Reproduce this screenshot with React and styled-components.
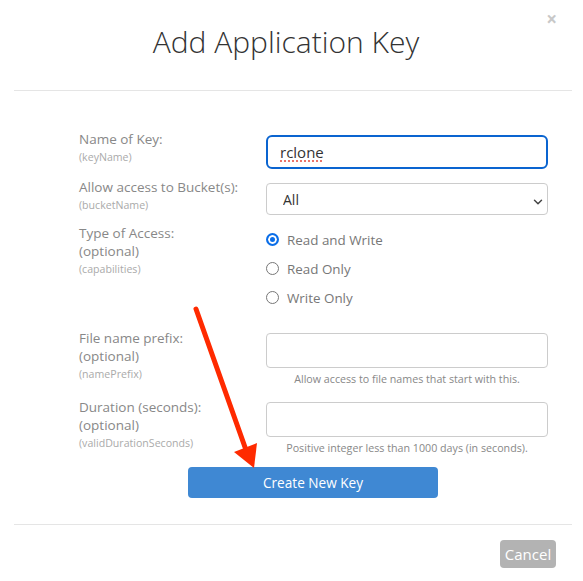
import React from 'react';
import styled, { createGlobalStyle } from 'styled-components';
import { ChevronDown } from 'lucide-react';

const GlobalStyle = createGlobalStyle`
  html, body {
    margin: 0;
    padding: 0;
    background: #fff;
    font-family: "Open Sans", "Liberation Sans", sans-serif;
  }
  * { box-sizing: border-box; }
`;

const App = () => {
  return (
    <>
      <GlobalStyle />
      <Modal>
        <Header>
          <Title>Add Application Key</Title>
          <Close>×</Close>
        </Header>
        <Body>
          <Row>
            <Label>
              <Main>Name of Key:</Main>
              <Hint>(keyName)</Hint>
            </Label>
            <Control>
              <TextInput $focus defaultValue="rclone" spellCheck />
            </Control>
          </Row>
          <Row>
            <Label>
              <Main>Allow access to Bucket(s):</Main>
              <Hint>(bucketName)</Hint>
            </Label>
            <Control>
              <SelectWrap>
                <Select defaultValue="all">
                  <option value="all">All</option>
                </Select>
                <Chevron><ChevronDown size={14} strokeWidth={2.5} /></Chevron>
              </SelectWrap>
            </Control>
          </Row>
          <Row>
            <Label>
              <Main>Type of Access:</Main>
              <Main>(optional)</Main>
              <Hint>(capabilities)</Hint>
            </Label>
            <Radios>
              <RadioRow><Radio $checked /> Read and Write</RadioRow>
              <RadioRow><Radio /> Read Only</RadioRow>
              <RadioRow><Radio /> Write Only</RadioRow>
            </Radios>
          </Row>
          <Row>
            <Label>
              <Main>File name prefix:</Main>
              <Main>(optional)</Main>
              <Hint>(namePrefix)</Hint>
            </Label>
            <Control $top={4}>
              <TextInput />
              <Help>Allow access to file names that start with this.</Help>
            </Control>
          </Row>
          <Row>
            <Label>
              <Main>Duration (seconds):</Main>
              <Main>(optional)</Main>
              <Hint>(validDurationSeconds)</Hint>
            </Label>
            <Control $top={4}>
              <TextInput />
              <Help>Positive integer less than 1000 days (in seconds).</Help>
            </Control>
          </Row>
          <CreateButton>Create New Key</CreateButton>
          <Arrow width="80" height="170" viewBox="0 0 80 170">
            <line x1="16" y1="9" x2="66" y2="150" stroke="#ff2a00" strokeWidth="5" strokeLinecap="round" />
            <polygon points="54,152 77,143 74,168" fill="#ff2a00" />
          </Arrow>
        </Body>
        <Footer>
          <CancelButton>Cancel</CancelButton>
        </Footer>
      </Modal>
    </>
  );
};

const Modal = styled.div`
  width: 583px;
  height: 581px;
  background: #fff;
  position: relative;
`;

const Header = styled.div`
  position: relative;
  height: 91px;
  margin: 0 11px 0 14px;
  padding-top: 22px;
  border-bottom: 1px solid #e5e5e5;
  text-align: center;
`;

const Title = styled.h1`
  margin: 0;
  font-size: 30px;
  font-weight: 300;
  line-height: 40px;
  color: #333;
  padding-right: 14px;
`;

const Close = styled.span`
  position: absolute;
  top: 7px;
  right: 15px;
  font-size: 19px;
  font-weight: 700;
  color: #c8c8c8;
  line-height: 24px;
`;

const Body = styled.div`
  position: relative;
  margin: 0 11px 0 14px;
  padding: 39px 35px 26px 65px;
  border-bottom: 1px solid #e5e5e5;
`;

const Row = styled.div`
  display: grid;
  grid-template-columns: 187px 282px;
  margin-bottom: 9px;
`;

const Label = styled.div`
  display: flex;
  flex-direction: column;
`;

const Main = styled.span`
  font-size: 13.5px;
  line-height: 18px;
  color: #888;
`;

const Hint = styled.span`
  font-size: 10.6px;
  line-height: 18px;
  color: #aaa;
`;

const Control = styled.div`
  display: flex;
  flex-direction: column;
  padding-top: ${p => p.$top ?? 5}px;
`;

const TextInput = styled.input`
  width: 282px;
  height: ${p => (p.$focus ? '34px' : '35px')};
  border: ${p => (p.$focus ? '2px solid #0a64d0' : '1px solid #ccc')};
  border-radius: ${p => (p.$focus ? '6px' : '4px')};
  padding: 0 ${p => (p.$focus ? '12px' : '13px')};
  font-family: "Open Sans", "Liberation Sans", sans-serif;
  font-size: 15px;
  color: #333;
  outline: none;
  text-decoration: underline dotted #e5473a;
  text-underline-offset: 3px;
`;

const SelectWrap = styled.div`
  position: relative;
  width: 282px;
  height: 32px;
`;

const Select = styled.select`
  appearance: none;
  width: 100%;
  height: 100%;
  border: 1px solid #ccc;
  border-radius: 4px;
  background: #fff;
  padding: 0 16px;
  font-family: "Open Sans", "Liberation Sans", sans-serif;
  font-size: 14px;
  color: #333;
`;

const Chevron = styled.span`
  position: absolute;
  right: 3px;
  top: 9px;
  color: #444;
  pointer-events: none;
`;

const Radios = styled.div`
  display: flex;
  flex-direction: column;
  padding-top: 1px;
  padding-bottom: 8px;
`;

const RadioRow = styled.label`
  display: flex;
  align-items: center;
  gap: 8px;
  height: 29px;
  font-size: 13.4px;
  color: #777;
`;

const Radio = styled.span`
  width: 13px;
  height: 13px;
  border-radius: 50%;
  border: ${p => (p.$checked ? '2px solid #0b6ee8' : '1px solid #777')};
  background: ${p => (p.$checked ? '#0b6ee8' : '#fff')};
  box-shadow: ${p => (p.$checked ? 'inset 0 0 0 2px #fff' : 'none')};
  margin-top: -1px;
`;

const Help = styled.span`
  margin-top: 2px;
  padding-bottom: 1px;
  font-size: 10.7px;
  line-height: 18px;
  text-align: center;
  color: #888;
`;

const CreateButton = styled.button`
  display: block;
  margin: 2px 0 0 109px;
  width: 250px;
  height: 31px;
  border: none;
  border-radius: 4px;
  background: #3f88d3;
  color: #fff;
  font-family: "Open Sans", "Liberation Sans", sans-serif;
  font-size: 13.6px;
`;

const Arrow = styled.svg`
  position: absolute;
  left: 166px;
  top: 209px;
  overflow: visible;
`;

const Footer = styled.div`
  display: flex;
  justify-content: flex-end;
  padding: 15px 27px 0 0;
`;

const CancelButton = styled.button`
  width: 56px;
  height: 28px;
  border: none;
  border-radius: 4px;
  background: #b3b3b3;
  color: #fff;
  font-family: "Open Sans", "Liberation Sans", sans-serif;
  font-size: 15px;
  padding: 0;
`;

export default App;
